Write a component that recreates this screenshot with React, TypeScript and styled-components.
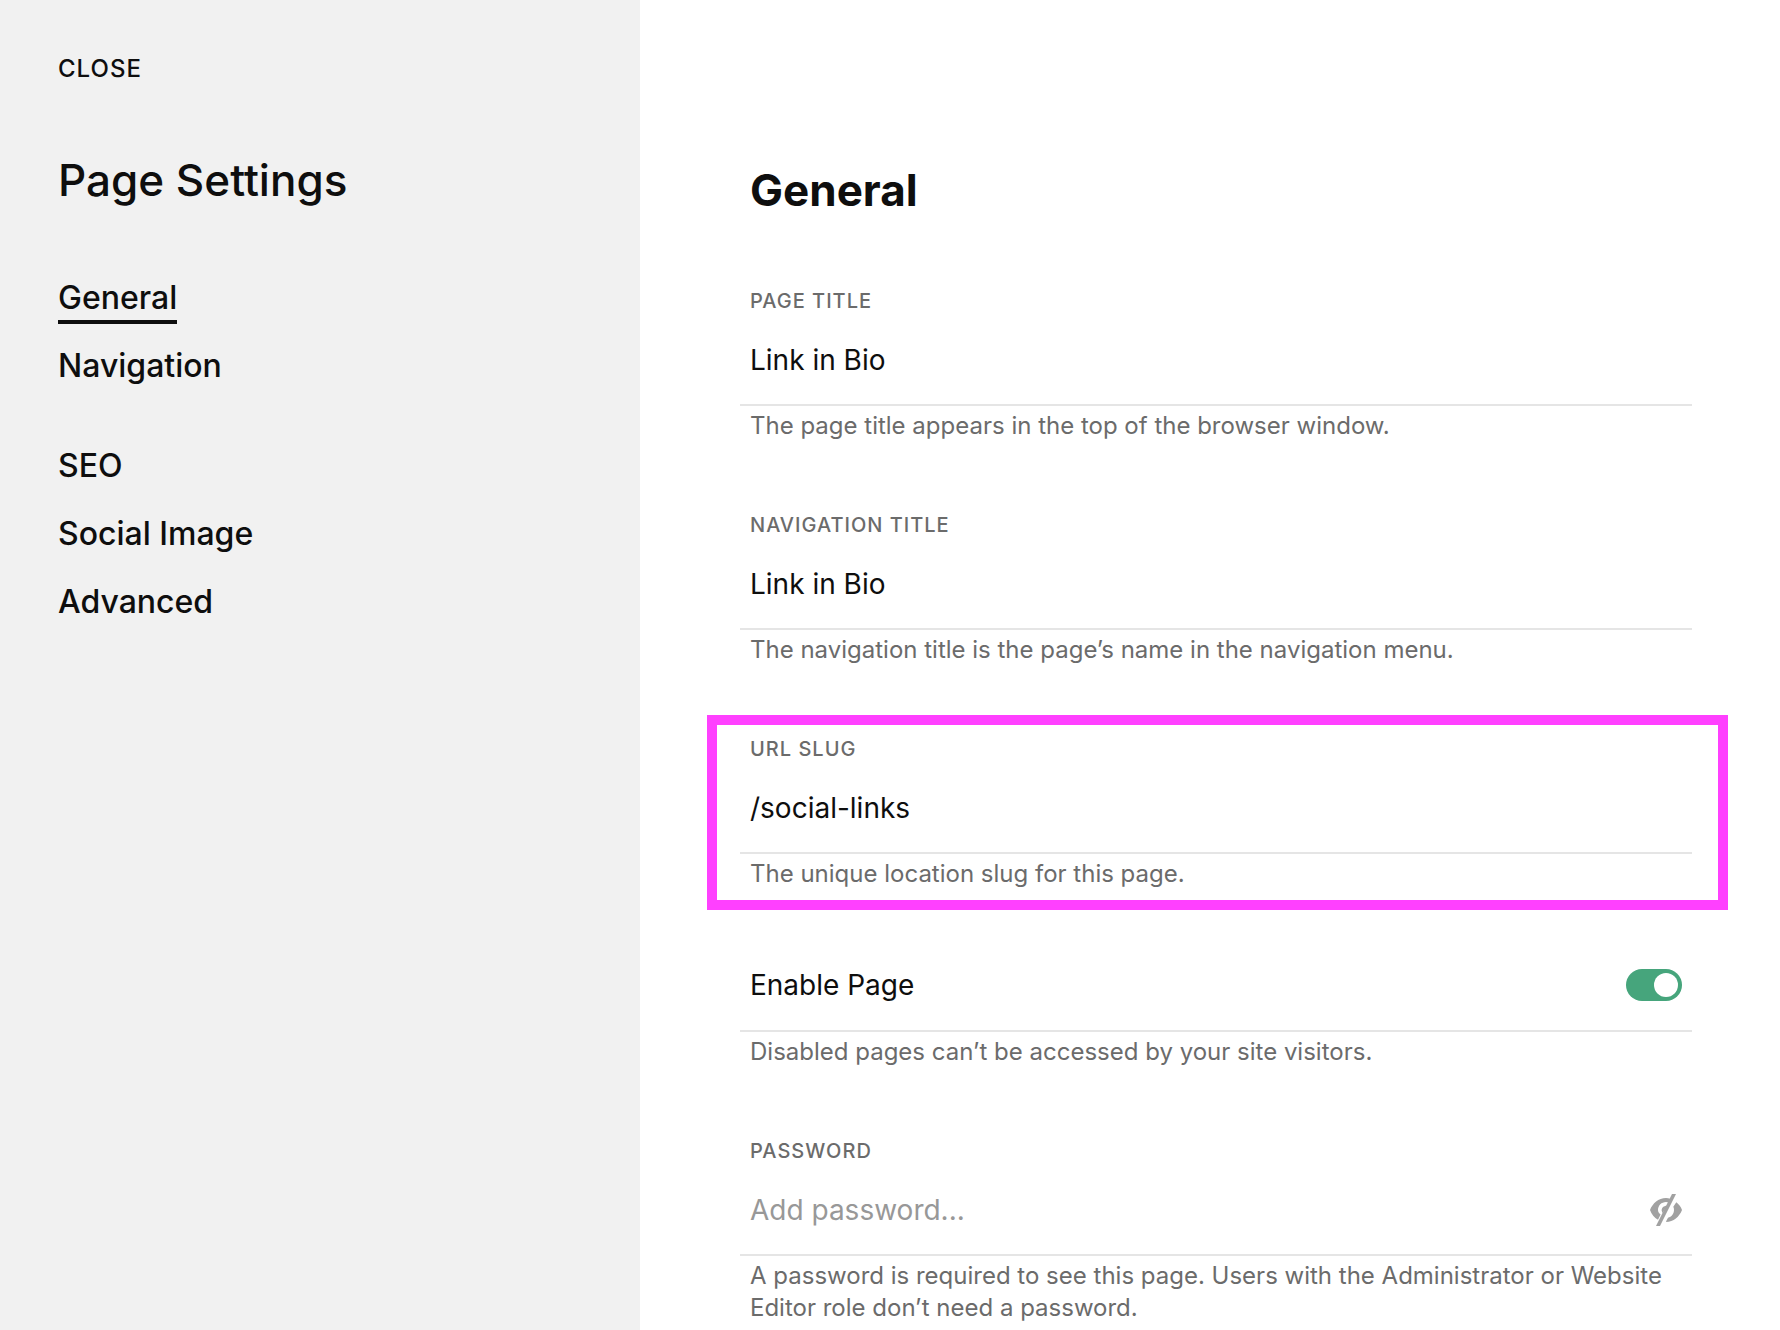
import React, { useId, useState } from "react";
import styled, { createGlobalStyle, css } from "styled-components";

const ink = "#0e0e0e";
const muted = "#6b6b6b";
const rule = "#e5e5e5";

const GlobalStyle = createGlobalStyle`
  *, *::before, *::after { box-sizing: border-box; }
  body {
    margin: 0;
    background: #fff;
    color: ${ink};
    font-family: Inter, "Liberation Sans", sans-serif;
  }
  button, input { font: inherit; color: inherit; }
`;

const Layout = styled.div`
  display: grid;
  grid-template-columns: minmax(280px, 32fr) 57fr;
  min-height: 100vh;
`;

const Sidebar = styled.aside`
  background: #f1f1f1;
  padding: 52px 58px;
`;

const CloseButton = styled.button`
  display: block;
  margin: 0;
  padding: 0;
  border: 0;
  background: none;
  font-size: 24px;
  line-height: 34px;
  font-weight: 500;
  letter-spacing: 1px;
  cursor: pointer;
`;

const SidebarTitle = styled.h1`
  margin: 66px 0 0;
  font-size: 44px;
  line-height: 56px;
  font-weight: 500;
`;

const Nav = styled.nav`
  display: flex;
  flex-direction: column;
  gap: 56px;
  margin-top: 68px;
`;

const NavGroup = styled.div`
  display: flex;
  flex-direction: column;
  align-items: flex-start;
  gap: 24px;
`;

const NavLink = styled.a<{ $active?: boolean }>`
  position: relative;
  color: inherit;
  font-size: 32px;
  line-height: 44px;
  font-weight: 500;
  text-decoration: none;

  ${(p) =>
    p.$active &&
    css`
      &::after {
        content: "";
        position: absolute;
        inset: auto 0 -4px;
        height: 4px;
        background: ${ink};
      }
    `}
`;

const Main = styled.main`
  min-width: 0;
  padding: 162px 88px 0 100px;
`;

const PanelTitle = styled.h2`
  margin: 0 0 68px;
  padding: 0 10px;
  font-size: 44px;
  line-height: 56px;
  font-weight: 700;
`;

const Form = styled.form`
  display: flex;
  flex-direction: column;
  gap: 68px;
`;

const FieldBox = styled.div<{ $highlighted?: boolean }>`
  position: relative;

  ${(p) =>
    p.$highlighted &&
    css`
      &::after {
        content: "";
        position: absolute;
        inset: -19px -36px -20px -33px;
        border: 10px solid #ff40ff;
        pointer-events: none;
      }
    `}
`;

const FieldLabel = styled.label`
  display: block;
  padding: 0 10px;
  color: ${muted};
  font-size: 20px;
  line-height: 30px;
  font-weight: 500;
  letter-spacing: 1px;
  text-transform: uppercase;
`;

const Control = styled.div<{ $unlabelled?: boolean }>`
  display: flex;
  align-items: center;
  gap: 24px;
  height: ${(p) => (p.$unlabelled ? 74 : 90)}px;
  padding: ${(p) => (p.$unlabelled ? "0 10px 18px" : "0 10px")};
  border-bottom: 2px solid ${rule};
`;

const TextInput = styled.input`
  flex: 1;
  min-width: 0;
  padding: 0;
  border: 0;
  outline: 0;
  background: none;
  font-size: 28px;
  line-height: 36px;

  &::placeholder {
    color: #989898;
    opacity: 1;
  }
`;

const SwitchLabel = styled.label`
  flex: 1;
  font-size: 28px;
  line-height: 36px;
`;

const Switch = styled.input`
  appearance: none;
  display: flex;
  align-items: center;
  flex: none;
  width: 56px;
  height: 32px;
  margin: 0;
  padding: 4px;
  border-radius: 16px;
  background: #b5b5b5;
  cursor: pointer;

  &::before {
    content: "";
    width: 24px;
    height: 24px;
    border-radius: 50%;
    background: #fff;
  }

  &:checked {
    justify-content: flex-end;
    background: #46a57c;
  }
`;

const IconButton = styled.button`
  display: flex;
  flex: none;
  padding: 0;
  border: 0;
  background: none;
  color: #a1a1a1;
  cursor: pointer;
`;

const Help = styled.p`
  margin: 4px 0 0;
  padding: 0 10px;
  color: ${muted};
  font-size: 24px;
  line-height: 32px;
`;

function HiddenEyeIcon() {
  return (
    <svg width="32" height="32" viewBox="0 0 32 32" fill="currentColor" aria-hidden="true">
      <path d="M22 0h4L10 32H6z" />
      <path d="M20.6 5C19 4.300 17.500 4 16 4 8.500 4 2.500 9.500 0 16c1.500 4.200 4.300 7.600 8 9.700l2.600-5.200C9 19.200 8 17.700 8 16c0-4.400 3.400-8 8-8 1 0 2 .2 2.900.5z" />
      <path d="M17 11.800C13.500 11.800 11.500 14 11.700 16.500c.1 1 .4 1.800.9 2.500z" />
      <path d="M26.300 8.200C29 10.300 31 13 32 16c-2.500 6.500-8.500 12-16 12l.5-1.600 1.500-2.600c3.500-.9 6-4.100 6-7.800 0-1.200-.2-2.300-.7-3.300z" />
    </svg>
  );
}

interface TextFieldProps {
  label: string;
  help: string;
  value?: string;
  placeholder?: string;
  highlighted?: boolean;
}

function TextField({ label, help, value = "", placeholder, highlighted }: TextFieldProps) {
  const id = useId();
  const [text, setText] = useState(value);
  return (
    <FieldBox $highlighted={highlighted}>
      <FieldLabel htmlFor={id}>{label}</FieldLabel>
      <Control>
        <TextInput
          id={id}
          type="text"
          value={text}
          placeholder={placeholder}
          onChange={(e) => setText(e.target.value)}
        />
      </Control>
      <Help>{help}</Help>
    </FieldBox>
  );
}

function PasswordField() {
  const id = useId();
  const [text, setText] = useState("");
  const [visible, setVisible] = useState(false);
  return (
    <FieldBox>
      <FieldLabel htmlFor={id}>Password</FieldLabel>
      <Control>
        <TextInput
          id={id}
          type={visible ? "text" : "password"}
          value={text}
          placeholder="Add password..."
          onChange={(e) => setText(e.target.value)}
        />
        <IconButton
          type="button"
          aria-label="Show password"
          aria-pressed={visible}
          onClick={() => setVisible(!visible)}
        >
          <HiddenEyeIcon />
        </IconButton>
      </Control>
      <Help>
        A password is required to see this page. Users with the Administrator or Website Editor
        role don’t need a password.
      </Help>
    </FieldBox>
  );
}

function EnableField() {
  const id = useId();
  const [enabled, setEnabled] = useState(true);
  return (
    <FieldBox>
      <Control $unlabelled>
        <SwitchLabel htmlFor={id}>Enable Page</SwitchLabel>
        <Switch
          id={id}
          type="checkbox"
          role="switch"
          checked={enabled}
          onChange={(e) => setEnabled(e.target.checked)}
        />
      </Control>
      <Help>Disabled pages can’t be accessed by your site visitors.</Help>
    </FieldBox>
  );
}

export default function App() {
  return (
    <>
      <GlobalStyle />
      <Layout>
        <Sidebar>
          <CloseButton type="button">CLOSE</CloseButton>
          <SidebarTitle>Page Settings</SidebarTitle>
          <Nav aria-label="Page settings">
            <NavGroup>
              <NavLink href="#general" $active aria-current="page">
                General
              </NavLink>
              <NavLink href="#navigation">Navigation</NavLink>
            </NavGroup>
            <NavGroup>
              <NavLink href="#seo">SEO</NavLink>
              <NavLink href="#social-image">Social Image</NavLink>
              <NavLink href="#advanced">Advanced</NavLink>
            </NavGroup>
          </Nav>
        </Sidebar>
        <Main id="general">
          <PanelTitle>General</PanelTitle>
          <Form onSubmit={(e) => e.preventDefault()}>
            <TextField
              label="Page Title"
              value="Link in Bio"
              help="The page title appears in the top of the browser window."
            />
            <TextField
              label="Navigation Title"
              value="Link in Bio"
              help="The navigation title is the page’s name in the navigation menu."
            />
            <TextField
              label="URL Slug"
              value="/social-links"
              help="The unique location slug for this page."
              highlighted
            />
            <EnableField />
            <PasswordField />
          </Form>
        </Main>
      </Layout>
    </>
  );
}
